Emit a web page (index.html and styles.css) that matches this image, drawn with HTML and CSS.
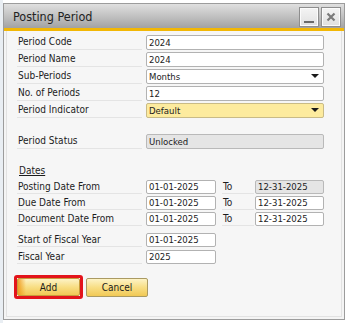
FILE: index.html
```html
<!DOCTYPE html>
<html>
<head>
<meta charset="utf-8">
<link rel="stylesheet" href="styles.css">
</head>
<body>
<div class="screen">
  <div class="dialog">
    <div class="titlebar">
      <span class="title">Posting Period</span>
      <div class="tbtns">
        <span class="tbtn"><span class="dash"></span></span>
        <span class="tbtn">
          <svg width="10" height="10" viewBox="0 0 10 10"><path d="M1.5 1.5 L8.5 8.5 M8.5 1.5 L1.5 8.5" stroke="#7a7a7a" stroke-width="2.2" fill="none"/></svg>
        </span>
      </div>
    </div>
    <div class="body">
      <div class="row"><span class="lbl">Period Code</span><span class="fld">2024</span></div>
      <div class="row"><span class="lbl">Period Name</span><span class="fld">2024</span></div>
      <div class="row"><span class="lbl">Sub-Periods</span><span class="fld combo">Months<span class="arrow"></span></span></div>
      <div class="row"><span class="lbl">No. of Periods</span><span class="fld">12</span></div>
      <div class="row"><span class="lbl">Period Indicator</span><span class="fld combo yellow">Default<span class="arrow"></span></span></div>
      <div class="row status"><span class="lbl">Period Status</span><span class="fld locked">Unlocked</span></div>

      <div class="section"><span class="sect">Dates</span></div>
      <div class="row sm"><span class="lbl">Posting Date From</span><span class="fld date">01-01-2025</span><span class="to">To</span><span class="fld date2 locked">12-31-2025</span></div>
      <div class="row sm"><span class="lbl">Due Date From</span><span class="fld date">01-01-2025</span><span class="to">To</span><span class="fld date2">12-31-2025</span></div>
      <div class="row sm"><span class="lbl">Document Date From</span><span class="fld date">01-01-2025</span><span class="to">To</span><span class="fld date2">12-31-2025</span></div>

      <div class="row sm fiscal1"><span class="lbl">Start of Fiscal Year</span><span class="fld date">01-01-2025</span></div>
      <div class="row sm fiscal2"><span class="lbl">Fiscal Year</span><span class="fld date">2025</span></div>

      <div class="buttons">
        <div class="focusbox"><button class="btn add">Add</button></div>
        <button class="btn">Cancel</button>
      </div>
    </div>
  </div>
</div>
</body>
</html>
```
FILE: styles.css
```css
html, body {
  margin: 0;
  padding: 0;
}
body {
  width: 348px;
  height: 323px;
  overflow: hidden;
  background: #ffffff;
  font-family: "DejaVu Sans Condensed", "DejaVu Sans", sans-serif;
  font-stretch: condensed;
  font-size: 10px;
  color: #1c1c1c;
}
.screen {
  box-sizing: border-box;
  height: 323px;
  padding: 3px 0 0 3px;
  background: linear-gradient(to right, #e9eef3 0, #e9eef3 3px, #ffffff 3px);
}
.dialog {
  box-sizing: border-box;
  width: 342px;
  height: 317px;
  border: 1px solid #9c9c9c;
  background: #f4f4f4;
  display: flex;
  flex-direction: column;
}
.titlebar {
  height: 24px;
  flex: none;
  background: linear-gradient(#e0e0e0, #c2c2c2 50%, #a2a2a2);
  border-bottom: 3px solid #f2b705;
  display: flex;
  align-items: center;
  padding-left: 9px;
}
.title {
  font-size: 12.5px;
  color: #222;
  flex: 1;
  padding-top: 1px;
}
.tbtns {
  display: flex;
  gap: 2px;
  margin-right: 3px;
  margin-top: 2px;
}
.tbtn {
  box-sizing: border-box;
  width: 20px;
  height: 20px;
  border: 1px solid #8e8e8e;
  background: linear-gradient(#f4f4f4, #e0e0e0);
  box-shadow: inset 0 0 0 1px #fbfbfb;
  display: flex;
  align-items: center;
  justify-content: center;
}
.dash {
  width: 10px;
  height: 2px;
  background: #6a6a6a;
  margin-top: 9px;
}
.body {
  flex: 1;
  margin: 0 2px 2px 2px;
  border: 1px solid #e2e2e2;
  border-top: 0;
  background: #f6f6f6;
  padding: 4px 0 0 10px;
}
.row {
  display: flex;
  height: 15px;
  margin-bottom: 2px;
}
.row.sm {
  height: 14px;
}
.lbl {
  box-sizing: border-box;
  width: 125px;
  margin-right: 4px;
  border-bottom: 1px solid #e4e4e4;
  line-height: 14px;
  padding-left: 1px;
  white-space: nowrap;
}
.row.sm .lbl {
  line-height: 13px;
}
.fld {
  box-sizing: border-box;
  width: 178px;
  border: 1px solid #b2b2b2;
  border-radius: 2px;
  background: #ffffff;
  padding-left: 2px;
  line-height: 13px;
  font-size: 9.5px;
  position: relative;
  white-space: nowrap;
}
.row.sm .fld {
  line-height: 12px;
}
.fld.yellow {
  background: #fdeb9e;
  border-color: #c9bb86;
}
.fld.locked {
  background: #e5e5e5;
  border-color: #b9b9b9;
}
.arrow {
  position: absolute;
  right: 4px;
  top: 4px;
  width: 0;
  height: 0;
  border-left: 4px solid transparent;
  border-right: 4px solid transparent;
  border-top: 4px solid #1a1a1a;
}
.row.status {
  margin-top: 16px;
}
.section {
  margin-top: 15px;
  height: 14px;
  margin-bottom: 2px;
  line-height: 14px;
  padding-left: 2px;
}
.sect {
  text-decoration: underline;
}
.fld.date {
  width: 70px;
}
.to {
  box-sizing: border-box;
  width: 32px;
  margin-left: 6px;
  margin-right: 1px;
  border-bottom: 1px solid #e4e4e4;
  line-height: 13px;
  padding-left: 1px;
}
.fld.date2 {
  width: 69px;
}
.row.fiscal1 {
  margin-top: 7px;
  margin-bottom: 3px;
}
.row.fiscal2 {
  margin-bottom: 0;
}
.buttons {
  display: flex;
  align-items: center;
  margin-top: 11px;
  margin-left: -3px;
  gap: 3px;
}
.focusbox {
  box-sizing: border-box;
  width: 69px;
  height: 24px;
  border: 3px solid #e3141b;
  border-radius: 3px;
  display: flex;
}
.btn {
  box-sizing: border-box;
  width: 62px;
  height: 19px;
  margin: 0;
  padding: 0;
  border: 1px solid #aa9a62;
  border-radius: 2px;
  background: linear-gradient(#fdf3c6, #f8de84 50%, #f1c955);
  font-family: "DejaVu Sans Condensed", "DejaVu Sans", sans-serif;
  font-stretch: condensed;
  font-size: 10px;
  color: #1c1c1c;
}
.btn.add {
  width: 63px;
  height: 18px;
  border-color: #c79b3c;
  background:
    linear-gradient(to right, rgba(238, 150, 20, 0.85), rgba(245, 190, 70, 0) 8px),
    linear-gradient(#fdf3c6, #f8de84 50%, #f1c955);
}
```
